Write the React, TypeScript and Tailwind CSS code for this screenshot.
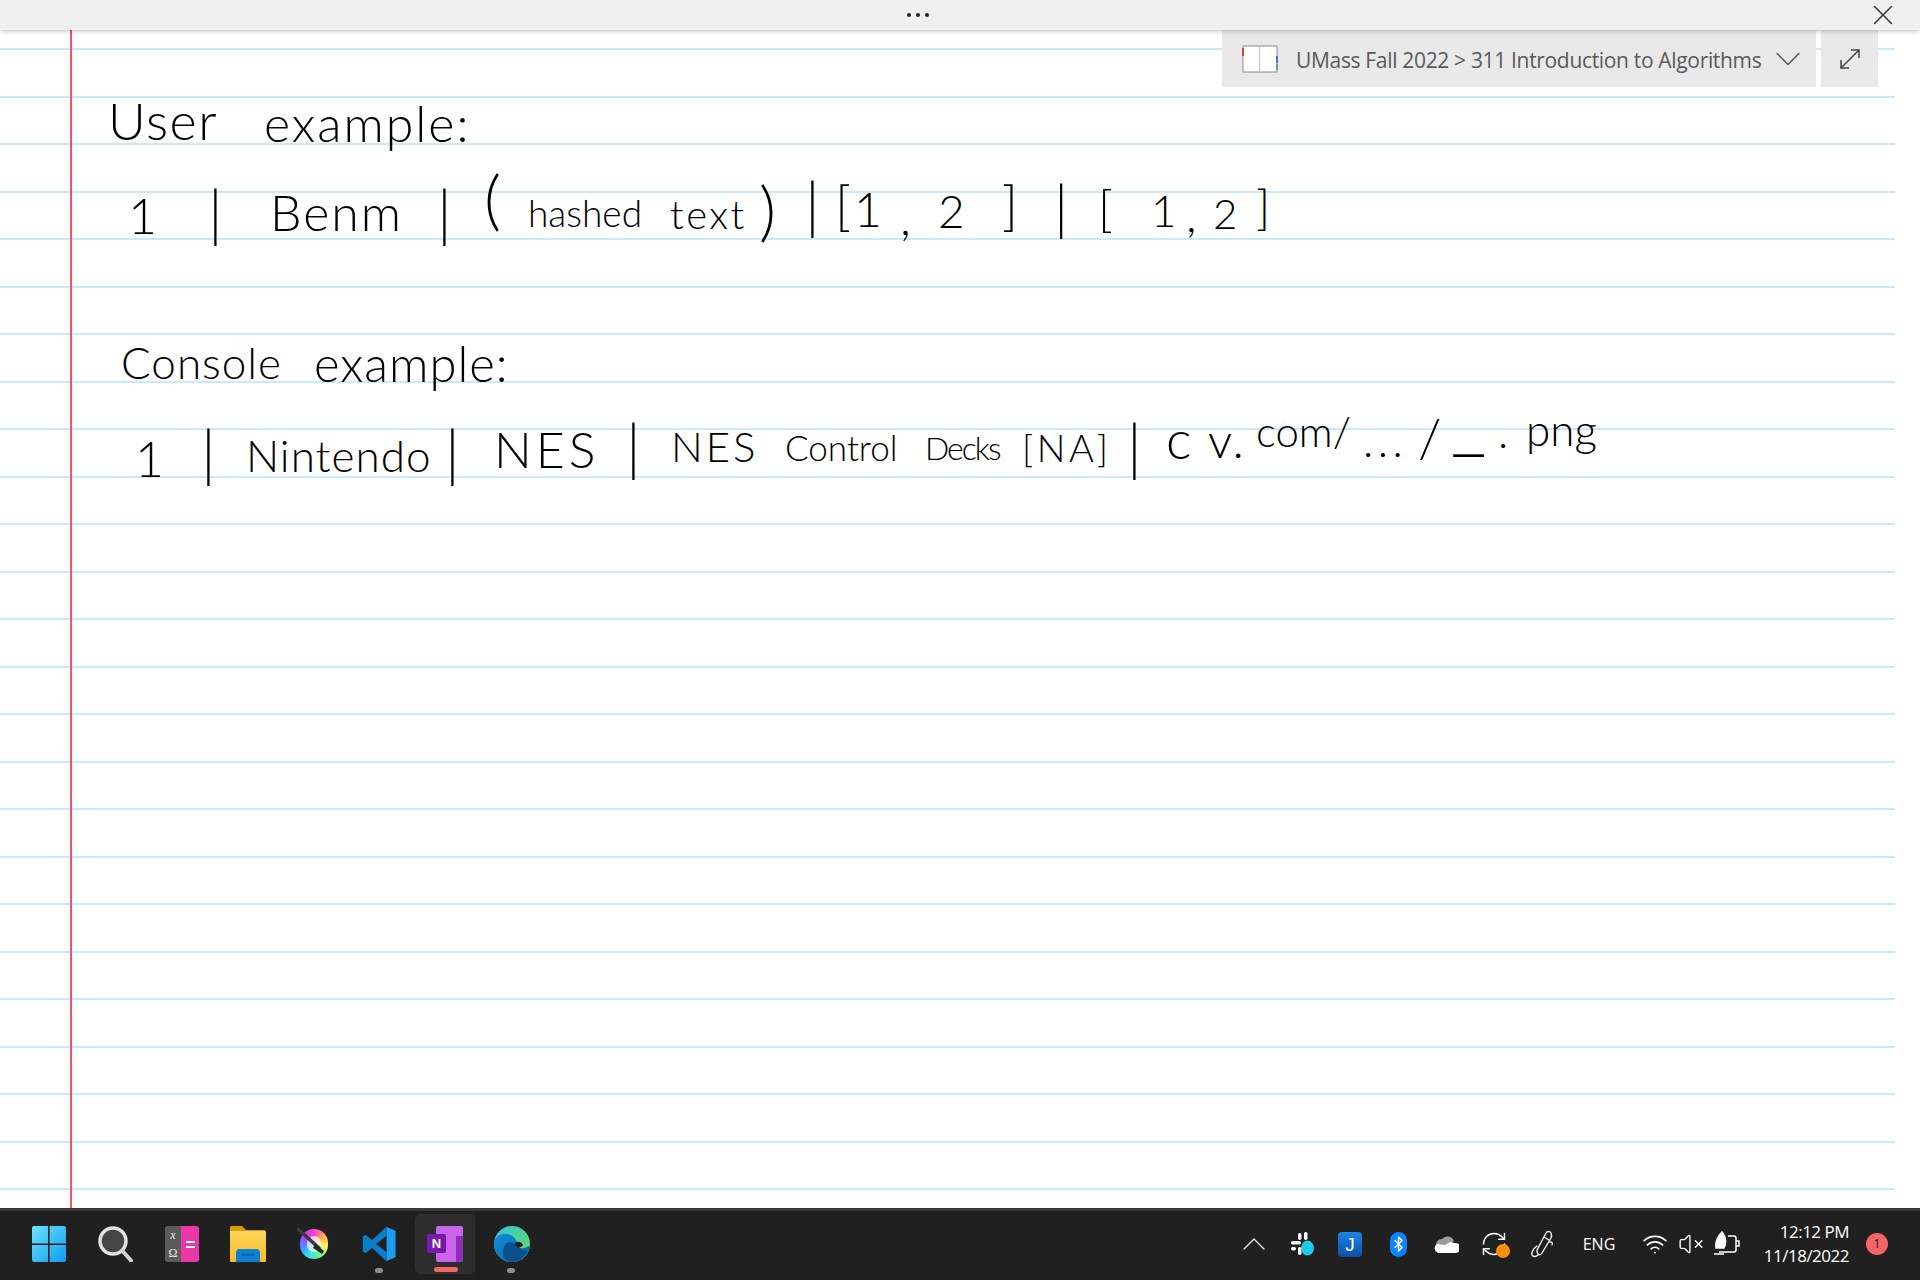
import React from 'react';
import { X, ChevronDown, ChevronUp, Bluetooth, Wifi, VolumeX, RefreshCw } from 'lucide-react';

const ruleCount = Array.from({ length: 25 });

// ink tokens sit at their place on the note canvas, canvas starts at y=30
const ink = [
  { t: 'User', c: 'left-[108px] top-[64px] text-[52px] tracking-[1.500px]' },
  { t: 'example:', c: 'left-[264px] top-[68px] text-[50px] tracking-[2px]' },
  { t: '1', c: 'left-[128px] top-[160px] text-[50px]' },
  { t: '|', c: 'left-[208px] top-[150px] text-[62px]' },
  { t: 'Benm', c: 'left-[270px] top-[157px] text-[50px] tracking-[2px]' },
  { t: '|', c: 'left-[437px] top-[150px] text-[62px]' },
  { t: '(', c: 'left-[484px] top-[135px] text-[66px]' },
  { t: 'hashed', c: 'left-[528px] top-[164px] text-[37px]' },
  { t: 'text', c: 'left-[670px] top-[164px] text-[40px] tracking-[2.500px]' },
  { t: ')', c: 'left-[759px] top-[146px] text-[66px]' },
  { t: '|', c: 'left-[805px] top-[142px] text-[62px]' },
  { t: '[', c: 'left-[835px] top-[148px] text-[54px]' },
  { t: '1', c: 'left-[854px] top-[155px] text-[48px]' },
  { t: ',', c: 'left-[900px] top-[161px] text-[50px]' },
  { t: '2', c: 'left-[938px] top-[158px] text-[46px]' },
  { t: ']', c: 'left-[1002px] top-[148px] text-[54px]' },
  { t: '|', c: 'left-[1054px] top-[146px] text-[60px]' },
  { t: '[', c: 'left-[1098px] top-[152px] text-[50px]' },
  { t: '1', c: 'left-[1151px] top-[158px] text-[44px]' },
  { t: ',', c: 'left-[1186px] top-[160px] text-[48px]' },
  { t: '2', c: 'left-[1213px] top-[162px] text-[42px]' },
  { t: ']', c: 'left-[1256px] top-[153px] text-[48px]' },
  { t: 'Console', c: 'left-[121px] top-[310px] text-[44px] tracking-[1px]' },
  { t: 'example:', c: 'left-[314px] top-[309px] text-[49px] tracking-[1px]' },
  { t: '1', c: 'left-[135px] top-[403px] text-[50px]' },
  { t: '|', c: 'left-[201px] top-[390px] text-[62px]' },
  { t: 'Nintendo', c: 'left-[246px] top-[403px] text-[44px] tracking-[1px]' },
  { t: '|', c: 'left-[445px] top-[390px] text-[62px]' },
  { t: 'NES', c: 'left-[494px] top-[394px] text-[50px] tracking-[4px]' },
  { t: '|', c: 'left-[626px] top-[384px] text-[62px]' },
  { t: 'NES', c: 'left-[671px] top-[395px] text-[42px] tracking-[3px]' },
  { t: 'Control', c: 'left-[785px] top-[400px] text-[35px]' },
  { t: 'Decks', c: 'left-[925px] top-[402px] text-[32px] tracking-[-2px]' },
  { t: '[NA]', c: 'left-[1022px] top-[398px] text-[38px] tracking-[3.500px]' },
  { t: '|', c: 'left-[1127px] top-[384px] text-[62px]' },
  { t: 'c', c: 'left-[1166px] top-[382px] text-[54px]' },
  { t: 'v.', c: 'left-[1208px] top-[386px] text-[48px] tracking-[2px]' },
  { t: 'com/', c: 'left-[1256px] top-[380px] text-[42px]' },
  { t: '...', c: 'left-[1363px] top-[388px] text-[44px] tracking-[4.500px]' },
  { t: '/', c: 'left-[1418px] top-[380px] text-[54px]' },
  { t: '_', c: 'left-[1451px] top-[347px] text-[78px]' },
  { t: '.', c: 'left-[1498px] top-[379px] text-[44px]' },
  { t: 'png', c: 'left-[1526px] top-[377px] text-[44px]' },
];

function WindowsLogo() {
  return (
    <svg width="36" height="36" viewBox="0 0 36 36">
      <defs>
        <linearGradient id="win" x1="0" y1="0" x2="1" y2="1">
          <stop offset="0" stopColor="#6fe3ff" />
          <stop offset="1" stopColor="#0d9af0" />
        </linearGradient>
      </defs>
      <path fill="url(#win)" d="M1 2a2 2 0 0 1 2-2h14v17.400H1zM18.600 0H33a2 2 0 0 1 2 2v15.400H18.600zM1 19h16v17H3a2 2 0 0 1-2-2zM18.600 19H35v15a2 2 0 0 1-2 2H18.600z" />
    </svg>
  );
}

function SearchIcon() {
  return (
    <svg width="36" height="36" viewBox="0 0 36 36" className="ml-[2px]">
      <circle cx="15" cy="15" r="13" fill="#454545" stroke="#e2e2e2" strokeWidth="3.500" />
      <path d="M24.500 25l8.500 9.500" stroke="#d2d2d2" strokeWidth="4" strokeLinecap="round" />
    </svg>
  );
}

function MathIcon() {
  return (
    <div className="ml-[2px] flex h-[36px] w-[34px] overflow-hidden rounded-[3px]">
      <div className="flex w-[16px] flex-col items-center justify-around bg-[#5b5b5b] font-['Liberation_Serif',serif] text-[12px] leading-none text-[#ececec]">
        <span className="italic">x</span>
        <span>Ω</span>
      </div>
      <div className="flex flex-1 flex-col items-center justify-center gap-[3px] bg-[#ea38a8]">
        <span className="h-[2px] w-[9px] bg-white" />
        <span className="h-[2px] w-[9px] bg-white" />
      </div>
    </div>
  );
}

function FolderIcon() {
  return (
    <svg width="38" height="36" viewBox="0 0 38 36" className="ml-[1px]">
      <defs>
        <linearGradient id="fold" x1="0" y1="0" x2="0" y2="1">
          <stop offset="0" stopColor="#ffd65c" />
          <stop offset="1" stopColor="#f7b92b" />
        </linearGradient>
      </defs>
      <path fill="#d99a06" d="M2 0h11l4 4h19v8H1V1z" />
      <path fill="url(#fold)" d="M1 5h35a1 1 0 0 1 1 1v29a1 1 0 0 1-1 1H2a1 1 0 0 1-1-1z" />
      <path fill="#0e7fd0" d="M7 36V27a4 4 0 0 1 4-4h16a4 4 0 0 1 4 4v9z" />
      <path fill="#0a5a9e" d="M12 28h14v1.500H12z" />
    </svg>
  );
}

function KritaIcon() {
  return (
    <div className="relative ml-[3px] h-[36px] w-[36px]">
      <div className="absolute left-[3px] top-[3px] h-[30px] w-[28px] rounded-full bg-[conic-gradient(#ff3bd0,#ffb347,#fff36b,#6cf28e,#36e0f5,#4a8cff,#b040ff,#ff3bd0)]" />
      <div className="absolute left-[10px] top-[10px] h-[16px] w-[14px] rounded-full bg-white/70" />
      <svg className="absolute left-0 top-0" width="36" height="36" viewBox="0 0 36 36">
        <path d="M1 3l21 19" stroke="#3a3a3a" strokeWidth="3.500" strokeLinecap="round" />
        <path d="M18 18l9 7-2 3-9-6z" fill="#262626" />
      </svg>
    </div>
  );
}

function VsCodeIcon() {
  return (
    <svg width="36" height="38" viewBox="0 0 100 100">
      <path fill="#0a7fc9" d="M71 2L31 39 13 25l-8 4v42l8 4 18-14 40 37V72L41 50l30-22z" />
      <path fill="#1f9cf0" d="M71 2l25 12v72L71 98z" />
    </svg>
  );
}

function OneNoteIcon() {
  return (
    <div className="relative h-[36px] w-[36px]">
      <div className="absolute right-0 top-0 flex h-[36px] w-[27px] justify-end rounded-[2px] bg-[#ca64ea]">
        <div className="mt-[10px] h-[26px] w-[7px] rounded-br-[2px] bg-[#8f2fb8]" />
      </div>
      <div className="absolute left-0 top-[8px] flex h-[19px] w-[19px] items-center justify-center rounded-[2px] bg-[#7719aa] font-['Liberation_Sans',sans-serif] text-[13px] font-bold text-white">
        N
      </div>
    </div>
  );
}

function EdgeIcon() {
  return (
    <svg width="36" height="38" viewBox="0 0 36 36" className="ml-[1px]">
      <defs>
        <linearGradient id="edgeA" x1="0" y1="0" x2="1" y2="1">
          <stop offset="0" stopColor="#2fc2d9" />
          <stop offset="1" stopColor="#6ee05a" />
        </linearGradient>
        <linearGradient id="edgeB" x1="0" y1="0" x2="1" y2="1">
          <stop offset="0" stopColor="#0f8fd6" />
          <stop offset="1" stopColor="#0b5fa8" />
        </linearGradient>
      </defs>
      <circle cx="18" cy="18" r="18" fill="url(#edgeA)" />
      <path fill="url(#edgeB)" d="M0 18C0 11 7 7 13 8c7 1 10 6 10 10 0 3 3 5 7 4 2-.5 4-1 6-3-1 10-9 17-18 17C8 36 0 28 0 18z" />
      <path fill="#0b4f8f" d="M13 17c5-2 10 0 12 4 3 4 6 5 9 3-3 7-9 12-16 12-6 0-9-5-9-10 0-4 1-7 4-9z" />
      <path fill="#202020" d="M22 16c3-1 6 0 7 3-1 2-4 3-6 2-2-1-2-4-1-5z" />
    </svg>
  );
}

function SlackIcon() {
  return (
    <svg width="23" height="24" viewBox="0 0 23 24">
      <g fill="#fff">
        <rect x="7" y="1" width="3.500" height="7" rx="1.750" />
        <rect x="13" y="0" width="3.500" height="8" rx="1.750" />
        <rect x="0" y="9" width="10" height="3.500" rx="1.750" />
        <rect x="0" y="15" width="5" height="3.500" rx="1.750" />
        <rect x="7" y="15" width="3.500" height="8" rx="1.750" />
      </g>
      <ellipse cx="16.500" cy="16" rx="6.500" ry="7.500" fill="#1fc8e8" />
    </svg>
  );
}

function OneDriveIcon() {
  return (
    <svg width="26" height="18" viewBox="0 0 26 18">
      <path fill="#9c9c9c" d="M3 11a6 6 0 0 1 6-7 7 7 0 0 1 12 2l-9 6z" />
      <path fill="#ffffff" d="M5 18a5 5 0 0 1-1-9l8 1 5-3 5 1a5 5 0 0 1 1 10z" />
    </svg>
  );
}

function PenIcon() {
  return (
    <svg width="26" height="28" viewBox="0 0 26 28" fill="none" stroke="#fff" strokeWidth="1.300" strokeLinejoin="round" strokeLinecap="round">
      <path d="M8 20L17 3c1-2 4-2 5 0s1 3 0 5L13 23c-2 3-5 2-5-3z" />
      <path d="M15 7l5 3" />
      <path d="M8 16c-3 2-6 6-5 9 1 2 4 2 6 0" />
      <path d="M21 12c2 0 3 1 2 3" />
    </svg>
  );
}

function BatteryLeaf() {
  return (
    <svg width="28" height="26" viewBox="0 0 28 26" fill="none" stroke="#fff" strokeWidth="1.500">
      <path d="M15 5h6a2 2 0 0 1 2 2v12a2 2 0 0 1-2 2H6" />
      <path d="M23 10h3v5h-3" />
      <path d="M3 17C2 10 6 4 9 1c3 4 5 10 2 16z" fill="#fff" />
      <path d="M1 23h10" />
    </svg>
  );
}

function TaskButton({ children, active, dot }: { children: React.ReactNode; active?: boolean; dot?: string }) {
  return (
    <div className={`relative flex h-[60px] w-[60px] items-center justify-center rounded-[5px] ${active ? 'border border-[#303030] bg-[#2d2d2d]' : ''}`}>
      {children}
      {dot === 'grey' && <span className="absolute bottom-[1px] left-[26px] h-[5px] w-[8px] rounded-full bg-[#8e8e8e]" />}
      {dot === 'red' && <span className="absolute bottom-[1px] left-[18px] h-[5px] w-[24px] rounded-full bg-[#f56565]" />}
    </div>
  );
}

function TrayItem({ children }: { children: React.ReactNode }) {
  return <div className="flex h-[48px] w-[48px] items-center justify-center">{children}</div>;
}

export default function App() {
  return (
    <div className="flex h-[1280px] w-[1920px] flex-col overflow-hidden bg-white font-['Open_Sans',sans-serif]">
      {/* Title bar */}
      <div className="relative z-20 flex h-[30px] shrink-0 items-center justify-center bg-[#efefef] shadow-[0_1px_5px_rgba(0,0,0,0.25)]">
        <div className="mr-[84px] flex gap-[5px]">
          <span className="h-[4px] w-[4px] rounded-full bg-[#222]" />
          <span className="h-[4px] w-[4px] rounded-full bg-[#222]" />
          <span className="h-[4px] w-[4px] rounded-full bg-[#222]" />
        </div>
        <X className="absolute right-[20px] top-[-2px] h-[34px] w-[34px] text-[#333]" strokeWidth={1} />
      </div>

      {/* Note canvas */}
      <div className="relative min-h-0 flex-1 overflow-hidden">
        <div className="flex w-[1895px] flex-col">
          {ruleCount.map((_, i) => (
            <div key={i} className={`h-[2px] bg-[#c9eafb] ${i === 0 ? 'mt-[18px]' : 'mt-[45.5px]'}`} />
          ))}
        </div>
        <div className="absolute bottom-0 left-[70px] top-0 w-[2px] bg-[#f4525c]" />

        {ink.map((k, i) => (
          <span key={i} className={`absolute font-['Lato',sans-serif] font-light leading-none text-black ${k.c}`}>
            {k.t}
          </span>
        ))}

        {/* Notebook picker */}
        <div className="absolute right-[42px] top-0 flex gap-[5px]">
          <div className="flex h-[57px] w-[594px] items-center bg-[#e9e9e9] pl-[20px]">
            <svg width="36" height="28" viewBox="0 0 36 28" className="shrink-0">
              <rect x="1" y="1" width="34" height="26" fill="#fff" stroke="#8a8a8a" />
              <path d="M17.500 1v26" stroke="#c4c4c4" />
              <rect x="0" y="3" width="2" height="8" fill="#d9452b" />
              <rect x="34" y="11" width="2" height="7" fill="#3f80b8" />
              <rect x="34" y="19" width="2" height="6" fill="#5da88a" />
            </svg>
            <span className="ml-[18px] whitespace-nowrap pt-[3px] text-[21px] leading-none tracking-[-0.33px] text-[#5a5a5a]">
              UMass Fall 2022 &gt; 311 Introduction to Algorithms
            </span>
            <ChevronDown className="ml-[5px] h-[44px] w-[44px] text-[#555]" strokeWidth={0.8} />
          </div>
          <div className="flex h-[57px] w-[57px] items-center justify-center bg-[#e9e9e9]">
            <svg width="22" height="22" viewBox="0 0 22 22" fill="none" stroke="#444" strokeWidth="1.500">
              <path d="M2 20L20 2M12 2h8v8M2 12v8h8" />
            </svg>
          </div>
        </div>
      </div>

      {/* Taskbar */}
      <div className="flex h-[72px] shrink-0 items-center border-t-[3px] border-[#3a3a3a] bg-[#202020] pb-[3px] pl-[19px] text-white">
        <div className="flex items-center gap-[6px]">
          <TaskButton><WindowsLogo /></TaskButton>
          <TaskButton><SearchIcon /></TaskButton>
          <TaskButton><MathIcon /></TaskButton>
          <TaskButton><FolderIcon /></TaskButton>
          <TaskButton><KritaIcon /></TaskButton>
          <TaskButton dot="grey"><VsCodeIcon /></TaskButton>
          <TaskButton active dot="red"><OneNoteIcon /></TaskButton>
          <TaskButton dot="grey"><EdgeIcon /></TaskButton>
        </div>

        <div className="ml-auto flex items-center pr-[32px]">
          <TrayItem><ChevronUp className="h-[40px] w-[40px] text-[#e8e8e8]" strokeWidth={0.8} /></TrayItem>
          <TrayItem><SlackIcon /></TrayItem>
          <TrayItem>
            <div className="flex h-[25px] w-[24px] items-center justify-center rounded-[4px] bg-[linear-gradient(#1d84e6,#0d4fa8)] font-['Liberation_Sans',sans-serif] text-[19px] leading-none text-white">
              J
            </div>
          </TrayItem>
          <TrayItem>
            <div className="flex h-[25px] w-[17px] items-center justify-center rounded-full bg-[#0a84ff]">
              <Bluetooth className="h-[18px] w-[18px] text-white" strokeWidth={2} />
            </div>
          </TrayItem>
          <TrayItem><OneDriveIcon /></TrayItem>
          <TrayItem>
            <div className="relative h-[28px] w-[28px]">
              <RefreshCw className="h-[28px] w-[28px] text-white" strokeWidth={1.250} />
              <span className="absolute bottom-0 right-[-2px] h-[14px] w-[14px] rounded-full bg-[#f79009]" />
            </div>
          </TrayItem>
          <TrayItem><PenIcon /></TrayItem>
          <span className="w-[66px] text-center text-[16px] leading-none text-white">ENG</span>
          <div className="ml-[5px] flex items-center">
            <div className="flex w-[36px] justify-center"><Wifi className="h-[26px] w-[26px] text-white" strokeWidth={1.600} /></div>
            <div className="flex w-[36px] justify-center"><VolumeX className="h-[26px] w-[26px] text-white" strokeWidth={1.250} /></div>
            <div className="flex w-[36px] justify-center"><BatteryLeaf /></div>
          </div>
          <div className="ml-[14px] flex w-[90px] flex-col items-end text-[17px] leading-[24px] tracking-[-0.5px]">
            <span>12:12 PM</span>
            <span>11/18/2022</span>
          </div>
          <div className="ml-[17px] flex h-[22px] w-[22px] items-center justify-center rounded-full bg-[#f56565] text-[12px] text-[#1f1f1f]">
            1
          </div>
        </div>
      </div>
    </div>
  );
}
